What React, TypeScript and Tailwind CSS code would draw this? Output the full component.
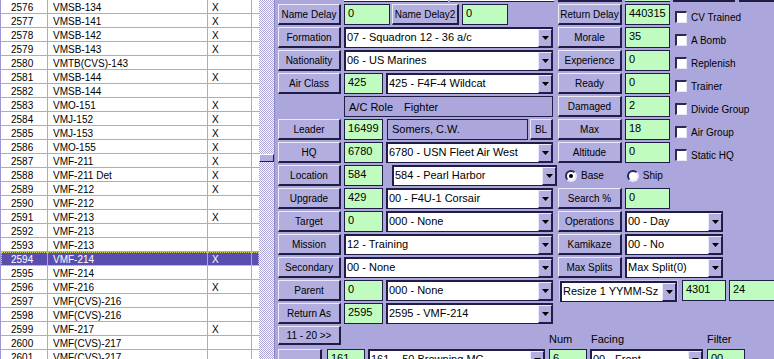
import React from "react";

const rows: [string, string, boolean][] = [
  ["2576", "VMSB-134", true],
  ["2577", "VMSB-141", true],
  ["2578", "VMSB-142", true],
  ["2579", "VMSB-143", true],
  ["2580", "VMTB(CVS)-143", false],
  ["2581", "VMSB-144", true],
  ["2582", "VMSB-144", false],
  ["2583", "VMO-151", true],
  ["2584", "VMJ-152", true],
  ["2585", "VMJ-153", true],
  ["2586", "VMO-155", true],
  ["2587", "VMF-211", true],
  ["2588", "VMF-211 Det", true],
  ["2589", "VMF-212", true],
  ["2590", "VMF-212", false],
  ["2591", "VMF-213", true],
  ["2592", "VMF-213", false],
  ["2593", "VMF-213", false],
  ["2594", "VMF-214", true],
  ["2595", "VMF-214", false],
  ["2596", "VMF-216", true],
  ["2597", "VMF(CVS)-216", false],
  ["2598", "VMF(CVS)-216", false],
  ["2599", "VMF-217", true],
  ["2600", "VMF(CVS)-217", false],
  ["2601", "VMF(CVS)-217", false],
];

const Btn = ({ label = "", className = "w-[63px] h-[21px]" }: { label?: string; className?: string }) => (
  <div
    className={`flex shrink-0 items-center justify-center bg-[#b2aee0] border-t border-l border-r-2 border-b-2 border-t-[#eceaf9] border-l-[#eceaf9] border-r-[#1f1d45] border-b-[#1f1d45] text-[10px] text-black whitespace-nowrap ${className}`}
  >
    {label}
  </div>
);

const Green = ({ value, className = "" }: { value: string; className?: string }) => (
  <div className={`h-[21px] shrink-0 bg-[#c0fcc0] border border-[#1f1d45] pl-[3px] pt-[1px] text-[11px] leading-[14px] text-black ${className}`}>
    {value}
  </div>
);

const Sel = ({ value, className = "" }: { value: string; className?: string }) => (
  <div className={`flex h-[21px] shrink-0 bg-white border-t-2 border-l-2 border-b border-r border-[#1f1d45] ${className}`}>
    <span className="flex-1 overflow-hidden whitespace-nowrap pl-[1px] text-[11px] leading-[17px] text-black">{value}</span>
    <span className="flex w-[14px] shrink-0 items-center justify-center bg-[#b2aee0] border-t border-l border-r border-b border-t-[#eceaf9] border-l-[#eceaf9] border-r-[#1f1d45] border-b-[#1f1d45]">
      <svg width="7" height="4" viewBox="0 0 7 4">
        <path d="M0 0h7L3.5 4z" fill="#000" />
      </svg>
    </span>
  </div>
);

const Check = ({ label }: { label: string }) => (
  <div className="ml-[5px] flex h-[21px] items-center gap-[4px] pt-[5px]">
    <div className="h-[12px] w-[12px] shrink-0 bg-white border-t-2 border-l-2 border-b border-r border-t-[#2a2855] border-l-[#2a2855] border-b-[#e8e6f8] border-r-[#e8e6f8]" />
    <span className="whitespace-nowrap text-[10px] text-black">{label}</span>
  </div>
);

const Radio = ({ label, on }: { label: string; on?: boolean }) => (
  <div className="flex items-center gap-[4px]">
    <div className="flex h-[12px] w-[12px] items-center justify-center rounded-full bg-white border-2 border-t-[#2a2855] border-l-[#2a2855] border-b-[#e8e6f8] border-r-[#e8e6f8]">
      {on && <div className="h-[4px] w-[4px] rounded-full bg-black" />}
    </div>
    <span className="text-[10px] text-black">{label}</span>
  </div>
);

const Row = ({ left, right }: { left: React.ReactNode; right?: React.ReactNode }) => (
  <div className="flex h-[21px] shrink-0">
    <div className="flex w-[280px] shrink-0">{left}</div>
    <div className="flex shrink-0">{right}</div>
  </div>
);

const UnitList = () => (
  <div className="h-full w-[259px] shrink-0 overflow-hidden bg-white border-l border-[#9d98d3]">
    {rows.map(([id, name, x]) => {
      const sel = id === "2594";
      return (
        <div
          key={id}
          className={`flex h-[14px] border-b border-[#aba7dc] leading-[13px] ${
            sel ? "bg-[#5a4fae] text-white outline-1 outline-dotted outline-[#d8d86a] -outline-offset-1" : "text-black"
          }`}
        >
          <div className="w-[47px] shrink-0 border-r border-[#aba7dc] pl-[10px] pt-[1px]">{id}</div>
          <div className="w-[160px] shrink-0 border-r border-[#aba7dc] pl-[5px] pt-[1px]">{name}</div>
          <div className="w-[44px] shrink-0 border-r border-[#aba7dc] pl-[4px] pt-[1px]">{x ? "X" : ""}</div>
          <div className="flex-1" />
        </div>
      );
    })}
  </div>
);

export default function App() {
  return (
    <div className="flex h-[359px] w-[774px] overflow-hidden font-['Liberation_Sans',Arial,sans-serif] text-[10px]">
      <UnitList />

      <div className="w-[15px] shrink-0 bg-[image:repeating-conic-gradient(#aba7dc_0_25%,#ffffff_0_50%)] bg-[length:2px_2px]">
        <div className="mt-[154px] h-[8px] bg-[#b2aee0] border-t border-l border-r border-b border-t-white border-l-white border-r-[#1f1d45] border-b-[#1f1d45]" />
      </div>

      <div className="flex flex-1 flex-col gap-[2px] overflow-hidden bg-[#aba7dc] border-l border-[#8c87c6] pl-[3px]">
        {/* tail of the row above */}
        <div className="flex h-[2px] shrink-0">
          <div className="flex w-[280px] shrink-0">
            <div className="ml-[66px] w-[104px] bg-white border-b border-[#1f1d45]" />
            <div className="ml-[2px] w-[104px] bg-white border-b border-[#1f1d45]" />
          </div>
          <div className="flex shrink-0">
            <div className="w-[64px] bg-[#b2aee0] border-b-2 border-[#1f1d45]" />
            <div className="ml-[3px] w-[45px] bg-[#c0fcc0] border-b border-[#1f1d45]" />
            <div className="ml-[3px] w-[62px] bg-[#b2aee0] border-b-2 border-[#1f1d45]" />
            <div className="ml-[4px] w-[35px] bg-[#b2aee0] border-b-2 border-[#1f1d45]" />
          </div>
        </div>

        <Row
          left={
            <>
              <Btn label="Name Delay" />
              <Green value="0" className="ml-[3px] w-[46px]" />
              <Btn label="Name Delay2" className="ml-[2px] w-[67px] h-[21px]" />
              <Green value="0" className="ml-[3px] w-[46px]" />
            </>
          }
          right={
            <>
              <Btn label="Return Delay" className="w-[64px] h-[21px]" />
              <Green value="440315" className="ml-[3px] w-[45px]" />
              <Check label="CV Trained" />
            </>
          }
        />
        <Row
          left={
            <>
              <Btn label="Formation" />
              <Sel value="07 - Squadron 12 - 36 a/c" className="ml-[3px] w-[209px]" />
            </>
          }
          right={
            <>
              <Btn label="Morale" className="w-[64px] h-[21px]" />
              <Green value="35" className="ml-[3px] w-[45px]" />
              <Check label="A Bomb" />
            </>
          }
        />
        <Row
          left={
            <>
              <Btn label="Nationality" />
              <Sel value="06 - US Marines" className="ml-[3px] w-[209px]" />
            </>
          }
          right={
            <>
              <Btn label="Experience" className="w-[64px] h-[21px]" />
              <Green value="0" className="ml-[3px] w-[45px]" />
              <Check label="Replenish" />
            </>
          }
        />
        <Row
          left={
            <>
              <Btn label="Air Class" />
              <Green value="425" className="ml-[3px] w-[39px]" />
              <Sel value="425 - F4F-4 Wildcat" className="ml-[3px] w-[167px]" />
            </>
          }
          right={
            <>
              <Btn label="Ready" className="w-[64px] h-[21px]" />
              <Green value="0" className="ml-[3px] w-[45px]" />
              <Check label="Trainer" />
            </>
          }
        />
        <Row
          left={
            <div className="ml-[66px] flex w-[209px] items-center border border-[#1f1d45] pl-[4px] pt-[1px] text-[11px] text-black">
              <span className="w-[55px]">A/C Role</span>
              <span>Fighter</span>
            </div>
          }
          right={
            <>
              <Btn label="Damaged" className="w-[64px] h-[21px]" />
              <Green value="2" className="ml-[3px] w-[45px]" />
              <Check label="Divide Group" />
            </>
          }
        />
        <Row
          left={
            <>
              <Btn label="Leader" />
              <Green value="16499" className="ml-[3px] w-[39px]" />
              <div className="ml-[4px] w-[141px] shrink-0 border border-[#1f1d45] pl-[4px] text-[11px] leading-[18px] text-black">
                Somers, C.W.
              </div>
              <Btn label="BL" className="ml-[2px] w-[23px] h-[21px]" />
            </>
          }
          right={
            <>
              <Btn label="Max" className="w-[64px] h-[21px]" />
              <Green value="18" className="ml-[3px] w-[45px]" />
              <Check label="Air Group" />
            </>
          }
        />
        <Row
          left={
            <>
              <Btn label="HQ" />
              <Green value="6780" className="ml-[3px] w-[39px]" />
              <Sel value="6780 - USN Fleet Air West" className="ml-[3px] w-[167px]" />
            </>
          }
          right={
            <>
              <Btn label="Altitude" className="w-[64px] h-[21px]" />
              <Green value="0" className="ml-[3px] w-[45px]" />
              <Check label="Static HQ" />
            </>
          }
        />
        <Row
          left={
            <>
              <Btn label="Location" />
              <Green value="584" className="ml-[3px] w-[39px]" />
              <Sel value="584 - Pearl Harbor" className="ml-[9px] w-[165px]" />
            </>
          }
          right={
            <div className="ml-[7px] flex items-center gap-[23px]">
              <Radio label="Base" on />
              <Radio label="Ship" />
            </div>
          }
        />
        <Row
          left={
            <>
              <Btn label="Upgrade" />
              <Green value="429" className="ml-[3px] w-[39px]" />
              <Sel value="00 - F4U-1 Corsair" className="ml-[3px] w-[167px]" />
            </>
          }
          right={
            <>
              <Btn label="Search %" className="w-[64px] h-[21px]" />
              <Green value="0" className="ml-[3px] w-[45px]" />
            </>
          }
        />
        <Row
          left={
            <>
              <Btn label="Target" />
              <Green value="0" className="ml-[3px] w-[39px]" />
              <Sel value="000 - None" className="ml-[3px] w-[167px]" />
            </>
          }
          right={
            <>
              <Btn label="Operations" className="w-[64px] h-[21px]" />
              <Sel value="00 - Day" className="ml-[3px] w-[98px]" />
            </>
          }
        />
        <Row
          left={
            <>
              <Btn label="Mission" />
              <Sel value="12 - Training" className="ml-[3px] w-[209px]" />
            </>
          }
          right={
            <>
              <Btn label="Kamikaze" className="w-[64px] h-[21px]" />
              <Sel value="00 - No" className="ml-[3px] w-[98px]" />
            </>
          }
        />
        <Row
          left={
            <>
              <Btn label="Secondary" />
              <Sel value="00 - None" className="ml-[3px] w-[209px]" />
            </>
          }
          right={
            <>
              <Btn label="Max Splits" className="w-[64px] h-[21px]" />
              <Sel value="Max Split(0)" className="ml-[3px] w-[98px]" />
            </>
          }
        />
        <Row
          left={
            <>
              <Btn label="Parent" />
              <Green value="0" className="ml-[3px] w-[39px]" />
              <Sel value="000 - None" className="ml-[3px] w-[167px]" />
            </>
          }
          right={
            <>
              <div className="ml-[1px] shrink-0 border border-[#c9c6ec]">
                <Sel value="Resize 1 YYMM-Sz" className="w-[117px] h-[19px]" />
              </div>
              <Green value="4301" className="ml-[4px] w-[44px]" />
              <Green value="24" className="ml-[3px] w-[50px]" />
            </>
          }
        />
        <Row
          left={
            <>
              <Btn label="Return As" />
              <Green value="2595" className="ml-[3px] w-[39px]" />
              <Sel value="2595 - VMF-214" className="ml-[3px] w-[167px]" />
            </>
          }
        />

        <div className="flex h-[21px] shrink-0 items-start">
          <Btn label="11 - 20 >>" className="w-[63px] h-[19px]" />
          <div className="ml-[208px] flex self-end text-[11px] leading-[16px] text-black">
            <span className="w-[42px]">Num</span>
            <span className="w-[116px]">Facing</span>
            <span>Filter</span>
          </div>
        </div>

        <div className="flex h-[21px] shrink-0">
          <Btn className="w-[44px] h-[21px]" />
          <Green value="161" className="ml-[5px] w-[38px]" />
          <Sel value="161 - .50 Browning MG" className="ml-[3px] w-[177px]" />
          <Green value="6" className="ml-[4px] w-[38px]" />
          <Sel value="00 - Front" className="ml-[3px] w-[113px]" />
          <Green value="00" className="ml-[4px] w-[38px]" />
        </div>
      </div>
    </div>
  );
}
